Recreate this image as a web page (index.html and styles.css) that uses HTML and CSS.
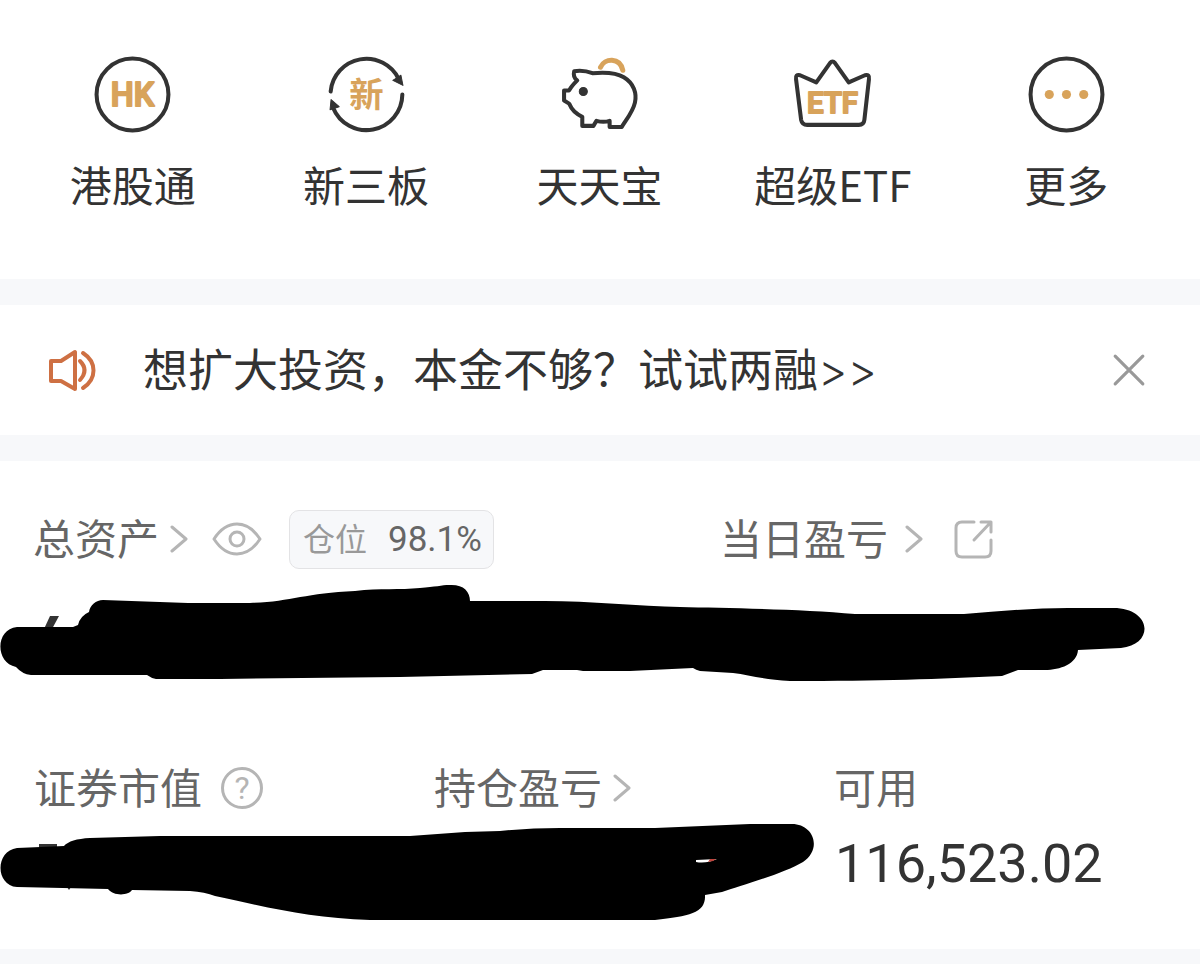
FILE: index.html
```html
<!DOCTYPE html>
<html lang="zh-CN">
<head>
<meta charset="utf-8">
<meta name="viewport" content="width=device-width, initial-scale=1">
<title>总资产</title>
<link rel="stylesheet" href="styles.css">
</head>
<body>
<nav class="shortcuts">
  <a class="shortcut" href="#hk">
    <svg class="shortcut-icon" viewBox="0 0 80 80" aria-hidden="true">
      <circle class="ink" cx="40" cy="40" r="35.5"/>
      <text class="badge badge-hk" x="40" y="51">HK</text>
    </svg>
    <span>港股通</span>
  </a>
  <a class="shortcut" href="#neeq">
    <svg class="shortcut-icon" viewBox="0 0 80 80" aria-hidden="true">
      <path class="ink" d="M4.6 37A35.5 35.5 0 0 1 72 25M75.4 40A35.5 35.5 0 0 1 7 53"/>
      <path class="ink-fill" d="M66 26l8-5 2 10zM4 55l1-10 8 7z"/>
      <text class="badge badge-new" x="40" y="52">新</text>
    </svg>
    <span>新三板</span>
  </a>
  <a class="shortcut" href="#ttb">
    <svg class="shortcut-icon" viewBox="0 0 80 80" aria-hidden="true">
      <path class="gold" d="M41 13C45 4 60 3 63 16"/>
      <path class="ink" d="M15 17C22 16 28 17 33 19C44 18 56 18 64 23C74 29 77 39 75 48C73 57 67 64 62 72H50V66Q44 68 37 66L34 71H23V62C16 59 12 54 10 49L5 46V36H10C12 32 15 29 18 26C15 24 14 21 15 17Z"/>
      <circle class="ink-fill" cx="24" cy="37" r="4"/>
    </svg>
    <span>天天宝</span>
  </a>
  <a class="shortcut" href="#etf">
    <svg class="shortcut-icon" viewBox="0 0 80 80" aria-hidden="true">
      <path class="ink" d="M24 28L37.500 9Q40 6 42.500 9L56 28L72 21Q77 20 76 25L71.500 65Q71 70 66 70H15Q10 70 9 65L4 25Q3 20 8 21Z"/>
      <text class="badge badge-etf" x="40" y="58">ETF</text>
    </svg>
    <span>超级ETF</span>
  </a>
  <a class="shortcut" href="#more">
    <svg class="shortcut-icon" viewBox="0 0 80 80" aria-hidden="true">
      <circle class="ink" cx="40" cy="40" r="35.5"/>
      <g class="gold-fill"><circle cx="23" cy="40" r="4.500"/><circle cx="40" cy="40" r="4.500"/><circle cx="57" cy="40" r="4.500"/></g>
    </svg>
    <span>更多</span>
  </a>
</nav>

<section class="notice">
  <svg class="speaker" viewBox="0 0 48 44" aria-hidden="true">
    <path d="M3 13H13L27 4V41L13 33H3ZM32 13Q41 22 32 32M35 5C49 14 49 31 35 40"/>
  </svg>
  <a class="notice-text" href="#margin">想扩大投资，本金不够？试试两融<span class="arrows">&gt;&gt;</span></a>
  <button class="close" type="button" aria-label="关闭">
    <svg viewBox="0 0 32 32"><path d="M3 3L29 29M29 3L3 29"/></svg>
  </button>
</section>

<main class="assets">
  <div class="summary">
    <div class="summary-cell">
      <a class="label" href="#total"><span class="label-text">总资产</span><svg class="chevron" viewBox="0 0 20 28" aria-hidden="true"><path d="M3 2L17 14L3 26"/></svg></a>
      <button class="icon-button eye" type="button" aria-label="显示或隐藏金额">
        <svg viewBox="0 0 50 34"><path d="M2 17C15-3 35-3 48 17C35 37 15 37 2 17Z"/><circle cx="25" cy="17" r="7"/></svg>
      </button>
      <span class="position"><span class="label-text">仓位</span><span class="position-value">98.1%</span></span>
    </div>
    <div class="summary-cell">
      <a class="label daily" href="#daily"><span class="label-text">当日盈亏</span><svg class="chevron" viewBox="0 0 20 28" aria-hidden="true"><path d="M3 2L17 14L3 26"/></svg></a>
      <button class="icon-button share" type="button" aria-label="分享">
        <svg viewBox="0 0 40 40"><path d="M20 3H8Q2 3 2 9V32Q2 38 8 38H31Q37 38 37 32V21M20 21L37 3M27 3H37V13"/></svg>
      </button>
    </div>
  </div>

  <div class="masked">
    <svg class="scribble" viewBox="0 0 1200 120" aria-hidden="true">
      <path class="remnant" d="M50 41H59L52 54H44Z"/>
      <path d="M17 52H73L78 50Q80 41 89 37C90 30 96 25 103 25L188 28H250C290 27 305 18 355 16C380 13 400 15 420 13C435 12 442 10 449 10C463 9 470 16 470 26H545C590 26 640 31 680 32C725 33 800 34 855 39H964C1000 36 1035 33 1068 33H1117C1153 36 1153 70 1121 73L1078 75C1077 89 1060 95 1045 95H1018L1002 101C940 104 880 106 790 106C765 105 750 100 733 98L700 96Q696 95 693 93L630 96H583L577 95H543L532 99L400 102L220 104H156Q151 103 147 100H31Q22 99 16 92C-5 88-5 54 17 52Z"/>
    </svg>
  </div>

  <div class="details">
    <div class="detail">
      <span class="label"><span class="label-text">证券市值</span></span>
      <button class="icon-button help" type="button" aria-label="说明">
        <svg viewBox="0 0 42 42"><circle cx="21" cy="21" r="19.5"/><text x="21" y="32">?</text></svg>
      </button>
    </div>
    <div class="detail">
      <a class="label" href="#holding"><span class="label-text">持仓盈亏</span><svg class="chevron" viewBox="0 0 20 28" aria-hidden="true"><path d="M3 2L17 14L3 26"/></svg></a>
    </div>
    <div class="detail"><span class="label"><span class="label-text">可用</span></span></div>
    <div class="amount">116,523.02</div>
    <svg class="scribble scribble-over" viewBox="0 0 1200 120" aria-hidden="true">
      <path class="remnant" d="M39 29H57V34H39ZM67 72H71L69 75Z"/>
      <path d="M17 33L64 31Q70 24 90 23L160 21H410L465 17L500 16Q530 13 560 13H655L750 9H792C813 9 823 33 803 47C785 58 740 71 722 77L705 80C706 98 690 101 655 105H370C310 103 270 93 215 81Q205 77 190 76L132 75C128 81 113 81 108 74L17 72C-5 70-5 36 17 33Z"/>
      <path class="gap" d="M696 45L717 44Q706 49 696 47Z"/>
      <path class="loss" d="M708 47L710 44H716L713 46Z"/>
    </svg>
  </div>
</main>
</body>
</html>
```
FILE: styles.css
```css
* { box-sizing: border-box; }

body {
  margin: 0;
  min-height: 100vh;
  background: #f7f8fa;
  color: #333;
  font-family: "Noto Sans CJK SC", sans-serif;
}

a { color: inherit; text-decoration: none; }

button {
  padding: 0;
  border: 0;
  background: none;
  cursor: pointer;
}

svg { display: block; fill: none; stroke-linecap: round; stroke-linejoin: round; }

.shortcuts {
  display: grid;
  grid-template-columns: repeat(5, 1fr);
  padding: 54px 17px 65px 16px;
  background: #fff;
}

.shortcut {
  display: flex;
  flex-direction: column;
  align-items: center;
  gap: 19px;
  font-size: 42px;
  line-height: 60px;
}

.shortcut-icon { width: 81px; height: 81px; }

.ink { stroke: #333; stroke-width: 4; }
.ink-fill { fill: #333; stroke: #333; stroke-width: 1; }
.gold { stroke: #d8a35b; stroke-width: 5; }
.gold-fill { fill: #d8a35b; }

.badge {
  fill: #d8a35b;
  stroke: #d8a35b;
  stroke-width: 2;
  font-family: Roboto, sans-serif;
  font-weight: 500;
  text-anchor: middle;
}

.badge-hk { font-size: 32px; }
.badge-etf { font-size: 29px; }

.badge-new {
  stroke-width: 0;
  font-family: "Noto Sans CJK SC", sans-serif;
  font-size: 34px;
  font-weight: 700;
}

.notice {
  display: flex;
  align-items: center;
  height: 130px;
  margin: 26px 0;
  padding: 0 54px 0 48px;
  background: #fff;
}

.speaker { width: 48px; height: 44px; stroke: #ce7043; stroke-width: 4; }

.notice-text {
  flex: 1;
  margin-left: 47px;
  padding-bottom: 2px;
  font-size: 45px;
  line-height: 64px;
}

.arrows { font-family: Inter, sans-serif; font-weight: 300; }

.close svg { width: 34px; height: 34px; stroke: #999; stroke-width: 3; }

.assets { padding: 48px 0 53px; background: #fff; }

.summary { display: grid; grid-template-columns: 3fr 2fr; }

.summary-cell { display: flex; align-items: center; height: 60px; }
.summary-cell:first-child { padding-left: 33px; }

.label {
  display: flex;
  align-items: center;
  gap: 10px;
  color: #666;
  font-size: 42px;
  line-height: 56px;
}

.label-text { padding-bottom: 4px; }

.daily { gap: 16px; }

.chevron { width: 20px; height: 28px; stroke: #b5b5b5; stroke-width: 3; }

.icon-button svg { stroke: #b5b5b5; stroke-width: 3; }

.eye { margin-left: 23px; }
.eye svg { width: 50px; height: 34px; }

.share { margin-left: 30px; }
.share svg { width: 40px; height: 40px; }

.position {
  display: flex;
  align-items: center;
  gap: 21px;
  height: 59px;
  margin-left: 27px;
  padding: 0 11px 0 13px;
  border: 1px solid #e3e3e5;
  border-radius: 10px;
  background: #f7f8fa;
  color: #999;
  font-size: 32px;
}

.position-value { color: #666; font-family: Roboto, sans-serif; font-size: 35px; }

.masked { margin-top: 6px; }

.scribble { width: 100%; height: auto; fill: #000; overflow: visible; }
.remnant { fill: #333; }
.gap { fill: #fff; }
.loss { fill: #c0443c; }

.details {
  position: relative;
  display: grid;
  grid-template-columns: repeat(3, 1fr);
  margin-top: 63px;
}

.detail { display: flex; align-items: center; padding-left: 34px; }

.help { margin-left: 19px; }
.help svg { width: 42px; height: 42px; }
.help text {
  fill: #b5b5b5;
  stroke: none;
  font-family: Roboto, sans-serif;
  font-size: 32px;
  text-anchor: middle;
}

.amount {
  grid-column: 3;
  margin-top: 14px;
  padding-left: 35px;
  font-family: Roboto, sans-serif;
  font-size: 54px;
  line-height: 64px;
}

.scribble-over { position: absolute; top: 57px; left: 0; }
```
